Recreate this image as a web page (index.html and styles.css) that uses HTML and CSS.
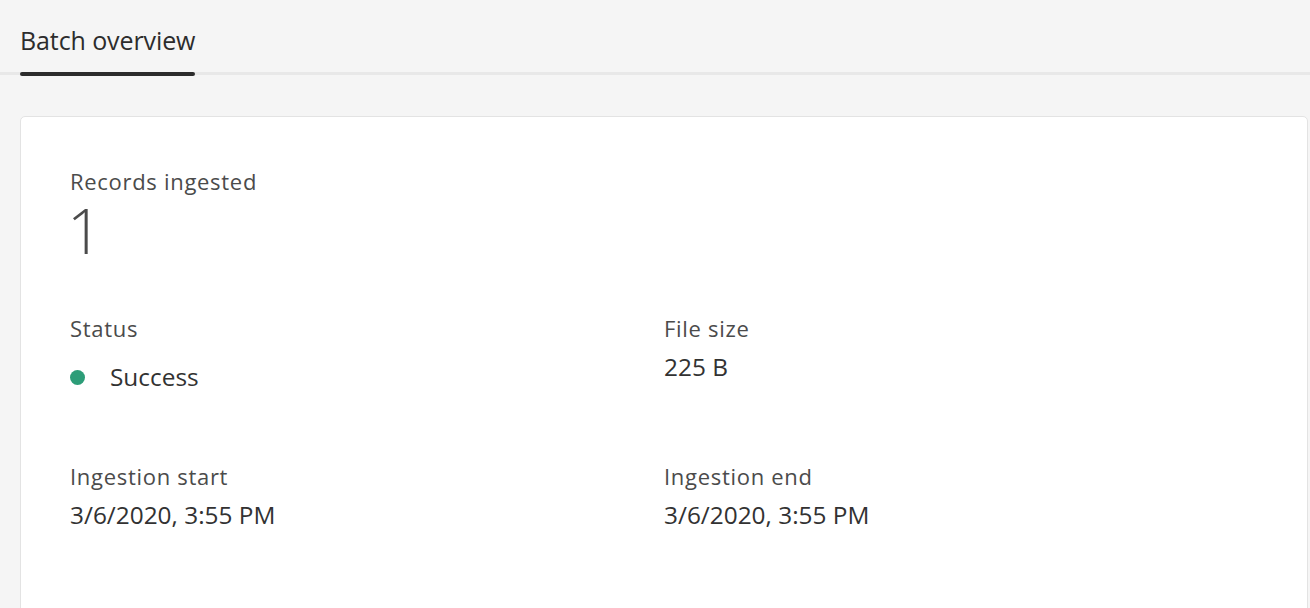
FILE: index.html
```html
<!DOCTYPE html>
<html lang="en">
<head>
<meta charset="utf-8">
<title>Batch overview</title>
<link rel="stylesheet" href="styles.css">
</head>
<body>
<div class="tabs">
  <div class="tab tab-selected">Batch overview<span class="tab-indicator"></span></div>
</div>
<main class="content">
  <section class="card">
    <div class="metric">
      <div class="label">Records ingested</div>
      <div class="metric-value">1</div>
    </div>
    <div class="fields">
      <div class="field">
        <div class="label">Status</div>
        <div class="value status">
          <span class="status-dot"></span>
          <span>Success</span>
        </div>
      </div>
      <div class="field">
        <div class="label">File size</div>
        <div class="value">225 B</div>
      </div>
      <div class="field">
        <div class="label">Ingestion start</div>
        <div class="value">3/6/2020, 3:55 PM</div>
      </div>
      <div class="field">
        <div class="label">Ingestion end</div>
        <div class="value">3/6/2020, 3:55 PM</div>
      </div>
    </div>
  </section>
</main>
</body>
</html>
```
FILE: styles.css
```css
html, body {
  margin: 0;
  background: #f5f5f5;
  font-family: "Open Sans", "Noto Sans", sans-serif;
  color: #2c2c2c;
  height: 100%;
  overflow: hidden;
}

.tabs {
  display: flex;
  padding: 25px 0 0 20px;
  border-bottom: 3px solid #e8e8e8;
}

.tab {
  position: relative;
  font-size: 25px;
  line-height: 30px;
  letter-spacing: -0.1px;
  color: #2c2c2c;
  padding-bottom: 17px;
}

.tab-indicator {
  position: absolute;
  left: 0;
  right: 0;
  bottom: -4px;
  height: 4px;
  border-radius: 2px;
  background: #2c2c2c;
}

.content {
  padding: 41px 2px 0 20px;
}

.card {
  background: #ffffff;
  border: 1px solid #e3e3e3;
  border-radius: 5px;
  padding: 50px 49px 120px 49px;
  min-height: 600px;
}

.label {
  font-size: 22px;
  line-height: 28px;
  letter-spacing: 0.7px;
  color: #4b4b4b;
}

.metric-value {
  margin-top: 3px;
  font-size: 62px;
  font-weight: 300;
  line-height: 64px;
  color: #4b4b4b;
  margin-left: -3px;
}

.fields {
  margin-top: 52px;
  display: grid;
  grid-template-columns: 1fr 1fr;
  row-gap: 69px;
}

.value {
  margin-top: 9px;
  font-size: 24.4px;
  line-height: 32px;
  color: #323232;
}

.status {
  display: flex;
  align-items: center;
  padding-top: 10px;
}

.status-dot {
  width: 15px;
  height: 15px;
  border-radius: 50%;
  background: #2d9d78;
  margin-right: 25px;
}
```
